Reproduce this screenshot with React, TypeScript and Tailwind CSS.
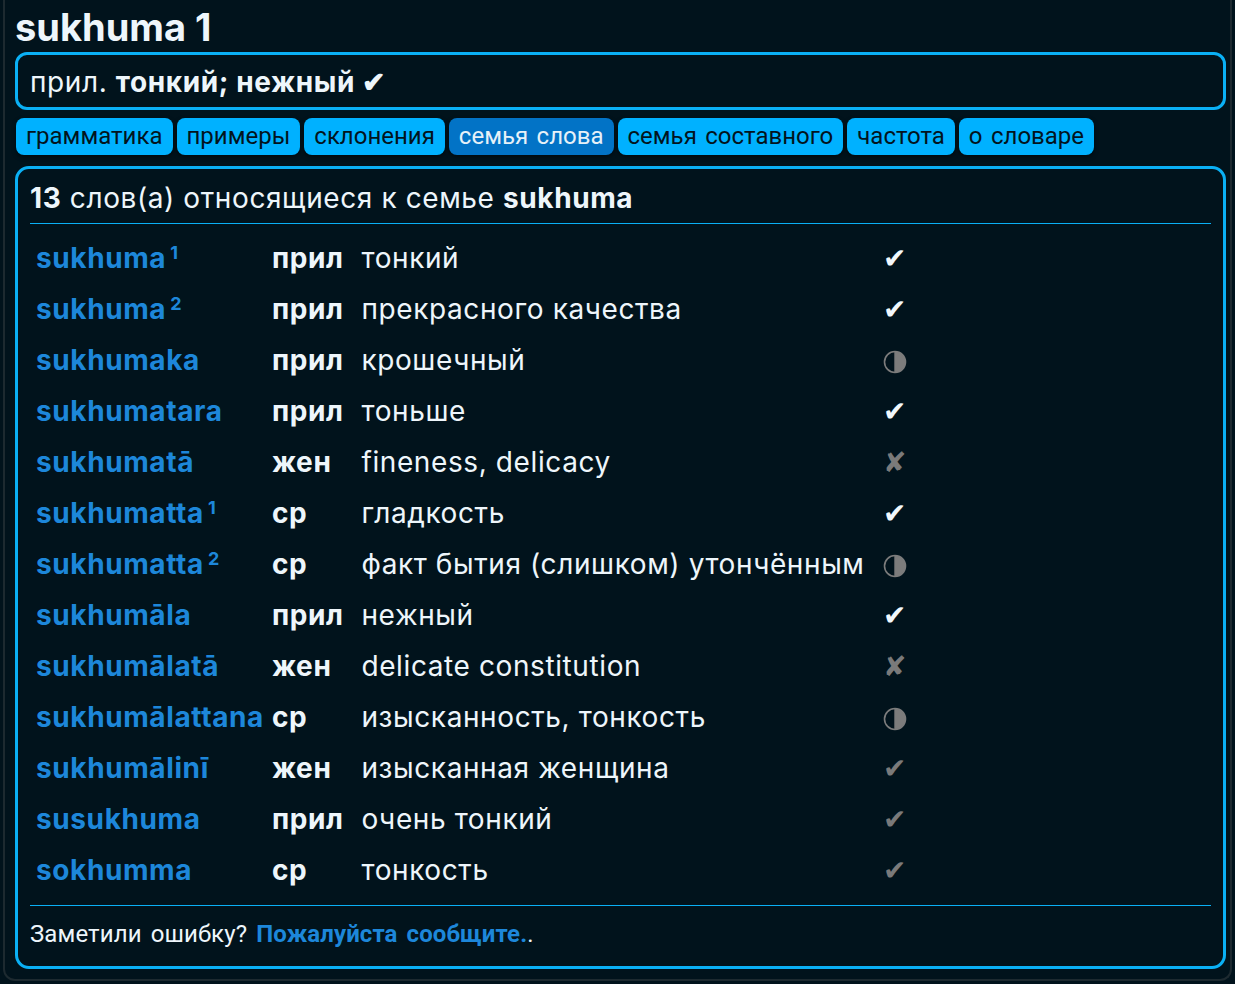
import React from "react";

type Row = {
  word: string;
  sup?: string;
  pos: string;
  meaning: string;
  mark: "check" | "half" | "cross" | "dim";
};

const rows: Row[] = [
  { word: "sukhuma", sup: "1", pos: "прил", meaning: "тонкий", mark: "check" },
  { word: "sukhuma", sup: "2", pos: "прил", meaning: "прекрасного качества", mark: "check" },
  { word: "sukhumaka", pos: "прил", meaning: "крошечный", mark: "half" },
  { word: "sukhumatara", pos: "прил", meaning: "тоньше", mark: "check" },
  { word: "sukhumatā", pos: "жен", meaning: "fineness, delicacy", mark: "cross" },
  { word: "sukhumatta", sup: "1", pos: "ср", meaning: "гладкость", mark: "check" },
  { word: "sukhumatta", sup: "2", pos: "ср", meaning: "факт бытия (слишком) утончённым", mark: "half" },
  { word: "sukhumāla", pos: "прил", meaning: "нежный", mark: "check" },
  { word: "sukhumālatā", pos: "жен", meaning: "delicate constitution", mark: "cross" },
  { word: "sukhumālattana", pos: "ср", meaning: "изысканность, тонкость", mark: "half" },
  { word: "sukhumālinī", pos: "жен", meaning: "изысканная женщина", mark: "dim" },
  { word: "susukhuma", pos: "прил", meaning: "очень тонкий", mark: "dim" },
  { word: "sokhumma", pos: "ср", meaning: "тонкость", mark: "dim" },
];

const tabs = [
  "грамматика",
  "примеры",
  "склонения",
  "семья слова",
  "семья составного",
  "частота",
  "о словаре",
];

function Mark({ kind }: { kind: Row["mark"] }) {
  if (kind === "half") {
    return (
      <svg width="24" height="24" viewBox="0 0 24 24" className="inline-block align-middle">
        <path d="M12 1.5 A10.5 10.5 0 0 1 12 22.5 Z" fill="#7c7c7c" />
        <circle cx="12" cy="12" r="10.5" fill="none" stroke="#7c7c7c" strokeWidth="1.6" />
        <line x1="12" y1="1.5" x2="12" y2="22.5" stroke="#7c7c7c" strokeWidth="1.4" />
      </svg>
    );
  }
  if (kind === "cross") return <span className="text-[#7a7a7a]">✘</span>;
  if (kind === "dim") return <span className="text-[#7a7a7a]">✔</span>;
  return <span className="text-[#f2f8fc]">✔</span>;
}

export default function App() {
  return (
    <div className="min-h-[984px] bg-[#01131c] font-['Inter','Noto_Sans',sans-serif] text-[#eef6fb]">
      <div className="mx-[3px] rounded-b-[12px] border-x-2 border-b-2 border-[#1d2a30] pb-[10px] pl-[10px] pr-[4px]">
        {/* Title */}
        <h1 className="pt-[4px] text-[38px] font-bold leading-[46px]">sukhuma 1</h1>

        {/* Definition */}
        <div className="mt-[2px] rounded-[12px] border-[3px] border-[#0ab0f5] px-[12px] pt-[8px] pb-[6px] text-[28px] leading-[38px] tracking-[0.6px]">
          прил. <b className="font-bold">тонкий; нежный ✔</b>
        </div>

        {/* Tabs */}
        <div className="mt-[8px] flex gap-[4px] pl-[1px] font-['Roboto',sans-serif] text-[24px] [word-spacing:2.5px]">
          {tabs.map((t) => (
            <span
              key={t}
              className={
                t === "семья слова"
                  ? "h-[37px] rounded-[8px] bg-[#0273c6] px-[10px] leading-[37px] text-[#e6f1f8] shadow-[0_2px_4px_rgba(0,0,0,0.5)]"
                  : "h-[37px] rounded-[8px] bg-[#00b1ff] px-[10px] leading-[37px] text-[#03141d] shadow-[0_2px_4px_rgba(0,0,0,0.5)]"
              }
            >
              {t}
            </span>
          ))}
        </div>

        {/* Word family */}
        <div className="mt-[11px] rounded-[14px] border-[3px] border-[#0ab0f5] px-[12px] pt-[10px] pb-[14px]">
          <div className="border-b border-[#0ab0f5] pb-[6px] text-[28px] leading-[38px] tracking-[0.6px]">
            <b>13</b> слов(а) относящиеся к семье <b>sukhuma</b>
          </div>

          <table className="mt-[9px] border-collapse text-[28px] leading-[39px] tracking-[0.6px]">
            <tbody>
              {rows.map((r, i) => (
                <tr key={i}>
                  <td className="py-[6px] pl-[6px] pr-[8px] font-bold whitespace-nowrap text-[#1d87da]">
                    {r.word}
                    {r.sup && (
                      <sup className="ml-[4px] text-[18px] leading-none">{r.sup}</sup>
                    )}
                  </td>
                  <td className="py-[6px] pr-[18px] font-bold">{r.pos}</td>
                  <td className="py-[6px] pr-[18px]">{r.meaning}</td>
                  <td className="py-[6px] text-center">
                    <Mark kind={r.mark} />
                  </td>
                </tr>
              ))}
            </tbody>
          </table>

          <div className="mt-[9px] border-t border-[#0ab0f5] pt-[10px] font-['Roboto',sans-serif] text-[24px] leading-[36px] tracking-[0.1px] [word-spacing:3px]">
            Заметили ошибку?{" "}
            <a className="font-bold text-[#1d87da]">Пожалуйста сообщите.</a>.
          </div>
        </div>
      </div>
    </div>
  );
}
